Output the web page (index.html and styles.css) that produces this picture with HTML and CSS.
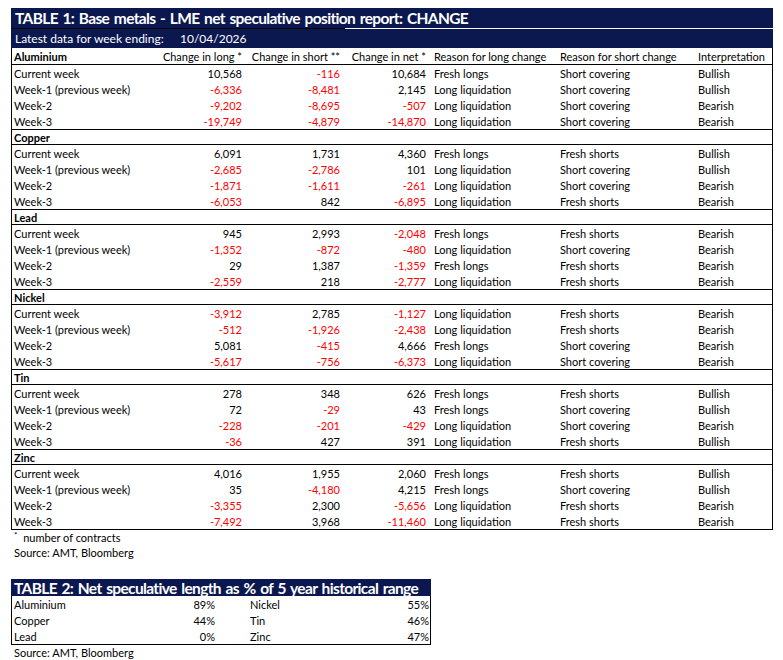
FILE: index.html
```html
<!DOCTYPE html>
<html>
<head>
<meta charset="utf-8">
<link rel="stylesheet" href="styles.css">
</head>
<body>
<div class="page">
  <section class="t1">
    <div class="title">TABLE 1: Base metals - LME net speculative position report: CHANGE</div>
    <div class="title-rule"></div>
    <div class="latest"><span class="latest-lbl">Latest data for week ending:</span><span>10/04/2026</span></div>
    <div class="box">
      <div class="grp">
        <div class="row head"><span class="metal">Aluminium</span><span class="n">Change in long *</span><span class="n">Change in short **</span><span class="n">Change in net *</span><span class="r1">Reason for long change</span><span class="r2">Reason for short change</span><span class="r3">Interpretation</span></div>
        <div class="rows">
          <div class="row"><span>Current week</span><span class="n">10,568</span><span class="n neg">-116</span><span class="n">10,684</span><span class="r1">Fresh longs</span><span class="r2">Short covering</span><span class="r3">Bullish</span></div>
          <div class="row"><span>Week-1 (previous week)</span><span class="n neg">-6,336</span><span class="n neg">-8,481</span><span class="n">2,145</span><span class="r1">Long liquidation</span><span class="r2">Short covering</span><span class="r3">Bullish</span></div>
          <div class="row"><span>Week-2</span><span class="n neg">-9,202</span><span class="n neg">-8,695</span><span class="n neg">-507</span><span class="r1">Long liquidation</span><span class="r2">Short covering</span><span class="r3">Bearish</span></div>
          <div class="row"><span>Week-3</span><span class="n neg">-19,749</span><span class="n neg">-4,879</span><span class="n neg">-14,870</span><span class="r1">Long liquidation</span><span class="r2">Short covering</span><span class="r3">Bearish</span></div>
        </div>
      </div>
      <div class="grp">
        <div class="row head"><span class="metal">Copper</span></div>
        <div class="rows">
          <div class="row"><span>Current week</span><span class="n">6,091</span><span class="n">1,731</span><span class="n">4,360</span><span class="r1">Fresh longs</span><span class="r2">Fresh shorts</span><span class="r3">Bullish</span></div>
          <div class="row"><span>Week-1 (previous week)</span><span class="n neg">-2,685</span><span class="n neg">-2,786</span><span class="n">101</span><span class="r1">Long liquidation</span><span class="r2">Short covering</span><span class="r3">Bullish</span></div>
          <div class="row"><span>Week-2</span><span class="n neg">-1,871</span><span class="n neg">-1,611</span><span class="n neg">-261</span><span class="r1">Long liquidation</span><span class="r2">Short covering</span><span class="r3">Bearish</span></div>
          <div class="row"><span>Week-3</span><span class="n neg">-6,053</span><span class="n">842</span><span class="n neg">-6,895</span><span class="r1">Long liquidation</span><span class="r2">Fresh shorts</span><span class="r3">Bearish</span></div>
        </div>
      </div>
      <div class="grp">
        <div class="row head"><span class="metal">Lead</span></div>
        <div class="rows">
          <div class="row"><span>Current week</span><span class="n">945</span><span class="n">2,993</span><span class="n neg">-2,048</span><span class="r1">Fresh longs</span><span class="r2">Fresh shorts</span><span class="r3">Bearish</span></div>
          <div class="row"><span>Week-1 (previous week)</span><span class="n neg">-1,352</span><span class="n neg">-872</span><span class="n neg">-480</span><span class="r1">Long liquidation</span><span class="r2">Short covering</span><span class="r3">Bearish</span></div>
          <div class="row"><span>Week-2</span><span class="n">29</span><span class="n">1,387</span><span class="n neg">-1,359</span><span class="r1">Fresh longs</span><span class="r2">Fresh shorts</span><span class="r3">Bearish</span></div>
          <div class="row"><span>Week-3</span><span class="n neg">-2,559</span><span class="n">218</span><span class="n neg">-2,777</span><span class="r1">Long liquidation</span><span class="r2">Fresh shorts</span><span class="r3">Bearish</span></div>
        </div>
      </div>
      <div class="grp">
        <div class="row head"><span class="metal">Nickel</span></div>
        <div class="rows">
          <div class="row"><span>Current week</span><span class="n neg">-3,912</span><span class="n">2,785</span><span class="n neg">-1,127</span><span class="r1">Long liquidation</span><span class="r2">Fresh shorts</span><span class="r3">Bearish</span></div>
          <div class="row"><span>Week-1 (previous week)</span><span class="n neg">-512</span><span class="n neg">-1,926</span><span class="n neg">-2,438</span><span class="r1">Long liquidation</span><span class="r2">Fresh shorts</span><span class="r3">Bearish</span></div>
          <div class="row"><span>Week-2</span><span class="n">5,081</span><span class="n neg">-415</span><span class="n">4,666</span><span class="r1">Fresh longs</span><span class="r2">Short covering</span><span class="r3">Bearish</span></div>
          <div class="row"><span>Week-3</span><span class="n neg">-5,617</span><span class="n neg">-756</span><span class="n neg">-6,373</span><span class="r1">Long liquidation</span><span class="r2">Short covering</span><span class="r3">Bearish</span></div>
        </div>
      </div>
      <div class="grp">
        <div class="row head"><span class="metal">Tin</span></div>
        <div class="rows">
          <div class="row"><span>Current week</span><span class="n">278</span><span class="n">348</span><span class="n">626</span><span class="r1">Fresh longs</span><span class="r2">Fresh shorts</span><span class="r3">Bullish</span></div>
          <div class="row"><span>Week-1 (previous week)</span><span class="n">72</span><span class="n neg">-29</span><span class="n">43</span><span class="r1">Fresh longs</span><span class="r2">Short covering</span><span class="r3">Bullish</span></div>
          <div class="row"><span>Week-2</span><span class="n neg">-228</span><span class="n neg">-201</span><span class="n neg">-429</span><span class="r1">Long liquidation</span><span class="r2">Short covering</span><span class="r3">Bearish</span></div>
          <div class="row"><span>Week-3</span><span class="n neg">-36</span><span class="n">427</span><span class="n">391</span><span class="r1">Long liquidation</span><span class="r2">Fresh shorts</span><span class="r3">Bullish</span></div>
        </div>
      </div>
      <div class="grp">
        <div class="row head"><span class="metal">Zinc</span></div>
        <div class="rows">
          <div class="row"><span>Current week</span><span class="n">4,016</span><span class="n">1,955</span><span class="n">2,060</span><span class="r1">Fresh longs</span><span class="r2">Fresh shorts</span><span class="r3">Bullish</span></div>
          <div class="row"><span>Week-1 (previous week)</span><span class="n">35</span><span class="n neg">-4,180</span><span class="n">4,215</span><span class="r1">Fresh longs</span><span class="r2">Short covering</span><span class="r3">Bullish</span></div>
          <div class="row"><span>Week-2</span><span class="n neg">-3,355</span><span class="n">2,300</span><span class="n neg">-5,656</span><span class="r1">Long liquidation</span><span class="r2">Fresh shorts</span><span class="r3">Bearish</span></div>
          <div class="row"><span>Week-3</span><span class="n neg">-7,492</span><span class="n">3,968</span><span class="n neg">-11,460</span><span class="r1">Long liquidation</span><span class="r2">Fresh shorts</span><span class="r3">Bearish</span></div>
        </div>
      </div>
    </div>
    <div class="note"><sup>*</sup> number of contracts</div>
    <div class="src">Source: AMT, Bloomberg</div>
  </section>

  <section class="t2">
    <div class="title">TABLE 2: Net speculative length as % of 5 year historical range</div>
    <div class="box2">
      <div class="row2"><span>Aluminium</span><span class="n">89%</span><span class="m2">Nickel</span><span class="n">55%</span></div>
      <div class="row2"><span>Copper</span><span class="n">44%</span><span class="m2">Tin</span><span class="n">46%</span></div>
      <div class="row2"><span>Lead</span><span class="n">0%</span><span class="m2">Zinc</span><span class="n">47%</span></div>
    </div>
    <div class="src src2">Source: AMT, Bloomberg</div>
  </section>
</div>
</body>
</html>
```

FILE: styles.css
```css
* { box-sizing: border-box; }
html, body { margin: 0; padding: 0; background: #fff; }
body {
  font-family: Lato, "Open Sans", "Liberation Sans", sans-serif;
  font-size: 11px;
  color: #000;
}
.page { padding: 8px 0 0 11px; }

.t1 { width: 762px; }
.title {
  background: #0b1850;
  color: #fff;
  font-weight: bold;
  font-size: 15.5px;
  letter-spacing: -0.65px;
  word-spacing: 1.5px;
  line-height: 21px;
  height: 20px;
  padding-left: 4px;
  white-space: nowrap;
  overflow: hidden;
}
.title-rule { height: 1px; width: 334px; background: #000; }
.latest {
  background: #0b1850;
  color: #fff;
  font-size: 12px;
  height: 19px;
  line-height: 19px;
  padding-left: 4px;
  display: flex;
}
.latest-lbl { width: 165px; }

.box {
  border-left: 1px solid #000;
  border-right: 1px solid #000;
}
.grp { border-bottom: 1px solid #000; }
.row {
  display: grid;
  grid-template-columns: 148px 82px 98px 86px 134px 138px 74px;
  height: 16px;
  line-height: 17px;
  white-space: nowrap;
}
.row > span:first-child { padding-left: 2px; }
.head { height: 15px; line-height: 15px; border-bottom: 1px solid #000; }
.grp:first-child .head { height: 17px; line-height: 17px; }
.metal { font-weight: bold; }
.n { text-align: right; }
.neg { color: #f00; }
.r1 { padding-left: 8px; }

.note { height: 15px; line-height: 16px; padding-left: 3px; }
.note sup { font-size: 8px; vertical-align: 4px; line-height: 0; margin-right: 3px; }
.src { height: 15px; line-height: 15px; padding-left: 3px; }

.t2 { width: 420px; margin-top: 19px; }
.t2 .title { height: 17px; line-height: 18px; padding-left: 3px; }
.box2 {
  border: 1px solid #000;
  border-top: none;
}
.row2 {
  display: grid;
  grid-template-columns: 148px 56px 114px 100px;
  height: 16px;
  line-height: 17px;
}
.row2 > span:first-child { padding-left: 2px; }
.row2 .n { padding-right: 1px; }
.m2 { padding-left: 34px; }
.src2 { height: 15px; line-height: 15px; }
```
